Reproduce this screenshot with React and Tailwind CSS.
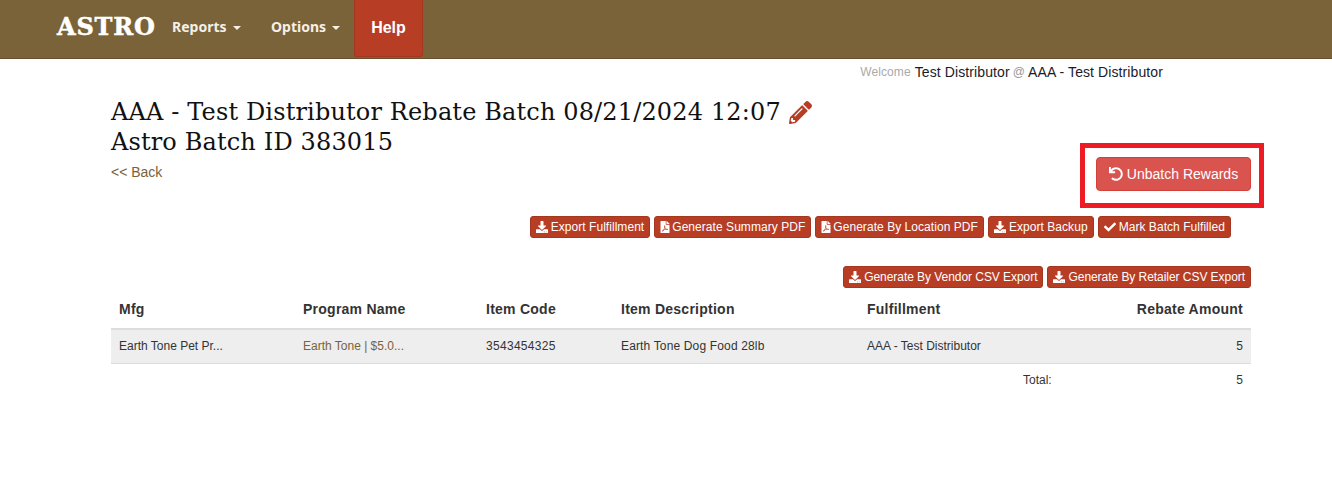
import React from 'react';
import { FaDownload, FaFilePdf, FaCheck, FaUndo, FaPencilAlt } from 'react-icons/fa';

const ActionButton = ({ icon: Icon, label, iconClass = 'text-[12px]' }) => (
  <button className="flex h-[22px] items-center gap-[3px] rounded-[3px] border border-[#a5361f] bg-[#b83d25] px-[5px] text-[12px] text-white">
    <Icon className={iconClass} />
    {label}
  </button>
);

const App = () => {
  return (
    <div className="relative h-[478px] overflow-hidden bg-white font-['Liberation_Sans',Arial,sans-serif] text-[14px] text-[#333]">
      <div className="flex h-[59px] items-stretch border-b border-[#665230] bg-[#7a6239] pl-[57px]">
        <div className="flex w-[115px] items-center pb-[5px] font-['DejaVu_Serif',serif] text-[24px] font-bold leading-none tracking-[0.8px] text-white [-webkit-text-stroke:0.5px_white]">
          ASTRO
        </div>
        <div className="flex w-[99px] items-center pb-[5px] font-['Noto_Sans',sans-serif] text-[14px] font-bold text-[#f5f0e6]">
          Reports
          <span className="ml-[6px] mt-[2px] border-x-[4px] border-t-[4px] border-x-transparent border-t-[#f5f0e6]" />
        </div>
        <div className="flex w-[83px] items-center pb-[5px] font-['Noto_Sans',sans-serif] text-[14px] font-bold text-[#f5f0e6]">
          Options
          <span className="ml-[6px] mt-[2px] border-x-[4px] border-t-[4px] border-x-transparent border-t-[#f5f0e6]" />
        </div>
        <div className="mb-[1px] flex w-[69px] items-center justify-center rounded-b-[3px] border border-t-0 border-[#a5361f] bg-[#b83d25] text-[16px] font-bold text-white">
          Help
        </div>
      </div>

      <div className="ml-[111px] w-[1140px]">
        <div className="flex h-[27px] items-center justify-end pb-[1px] pr-[88px] tracking-[0.1px]">
          <span className="text-[12px] text-[#aaa]">Welcome</span>
          <span className="ml-[4px] text-[14px] text-[#1a1a2a]">Test Distributor</span>
          <span className="ml-[3px] text-[12px] text-[#999]">@</span>
          <span className="ml-[3px] text-[14px] text-[#1a1a2a]">AAA - Test Distributor</span>
        </div>

        <div className="flex h-[105px] justify-between">
          <div className="pt-[11px]">
            <h1 className="flex items-center font-['DejaVu_Serif',serif] text-[24px] font-normal leading-[30px] tracking-[0.15px] text-[#111]">
              AAA - Test Distributor Rebate Batch 08/21/2024 12:07
              <FaPencilAlt className="ml-[8px] text-[23px] text-[#b83d25]" />
            </h1>
            <h1 className="font-['DejaVu_Serif',serif] text-[24px] font-normal leading-[30px] tracking-[0.15px] text-[#111]">
              Astro Batch ID 383015
            </h1>
            <div className="mt-[5px] text-[14px] leading-[20px] text-[#7a6239]">&lt;&lt; Back</div>
          </div>
          <div className="pt-[71px]">
            <button className="flex h-[34px] w-[155px] items-center justify-center gap-[4px] rounded-[4px] border border-[#d43f3a] bg-[#d9534f] text-[14px] text-white">
              <FaUndo className="text-[14px]" />
              Unbatch Rewards
            </button>
          </div>
        </div>

        <div className="flex justify-end gap-[4px] pr-[20px] pt-[25px] tracking-[0.05px]">
          <ActionButton icon={FaDownload} label="Export Fulfillment" />
          <ActionButton icon={FaFilePdf} iconClass="text-[12px] -mr-[2px] -ml-[1px]" label="Generate Summary PDF" />
          <ActionButton icon={FaFilePdf} iconClass="text-[12px] -mr-[2px] -ml-[1px]" label="Generate By Location PDF" />
          <ActionButton icon={FaDownload} label="Export Backup" />
          <ActionButton icon={FaCheck} label="Mark Batch Fulfilled" />
        </div>

        <div className="flex justify-end gap-[4px] pt-[28px] tracking-[-0.05px]">
          <ActionButton icon={FaDownload} label="Generate By Vendor CSV Export" />
          <ActionButton icon={FaDownload} label="Generate By Retailer CSV Export" />
        </div>

        <table className="mt-[6px] w-[1140px] table-fixed border-collapse">
          <thead>
            <tr className="h-[35px] border-b-2 border-[#ddd] text-left text-[14px] font-bold tracking-[0.25px] text-[#333] [&>th]:pb-[3px]">
              <th className="w-[184px] pl-[8px]">Mfg</th>
              <th className="w-[183px] pl-[8px]">Program Name</th>
              <th className="w-[135px] pl-[8px]">Item Code</th>
              <th className="w-[246px] pl-[8px]">Item Description</th>
              <th className="w-[156px] pl-[8px]">Fulfillment</th>
              <th className="pr-[8px] text-right">Rebate Amount</th>
            </tr>
          </thead>
          <tbody>
            <tr className="h-[34px] border-b border-[#ddd] bg-[#eee] text-[12px] text-[#333]">
              <td className="pl-[8px]">Earth Tone Pet Pr...</td>
              <td className="pl-[8px] text-[#7a6239]">Earth Tone | $5.0...</td>
              <td className="pl-[8px] tracking-[0.3px]">3543454325</td>
              <td className="pl-[8px] tracking-[0.15px]">Earth Tone Dog Food 28lb</td>
              <td className="pl-[8px]">AAA - Test Distributor</td>
              <td className="pr-[8px] text-right">5</td>
            </tr>
            <tr className="h-[34px] text-[12px] text-[#333]">
              <td colSpan={5} />
              <td className="pl-[8px] pr-[8px]">
                <div className="flex justify-between">
                  <span>Total:</span>
                  <span>5</span>
                </div>
              </td>
            </tr>
          </tbody>
        </table>
      </div>

      {/* annotation drawn over the screenshot */}
      <div className="absolute left-[1080px] top-[143px] h-[65px] w-[184px] border-[5px] border-[#ed1c24]" />
    </div>
  );
};

export default App;
